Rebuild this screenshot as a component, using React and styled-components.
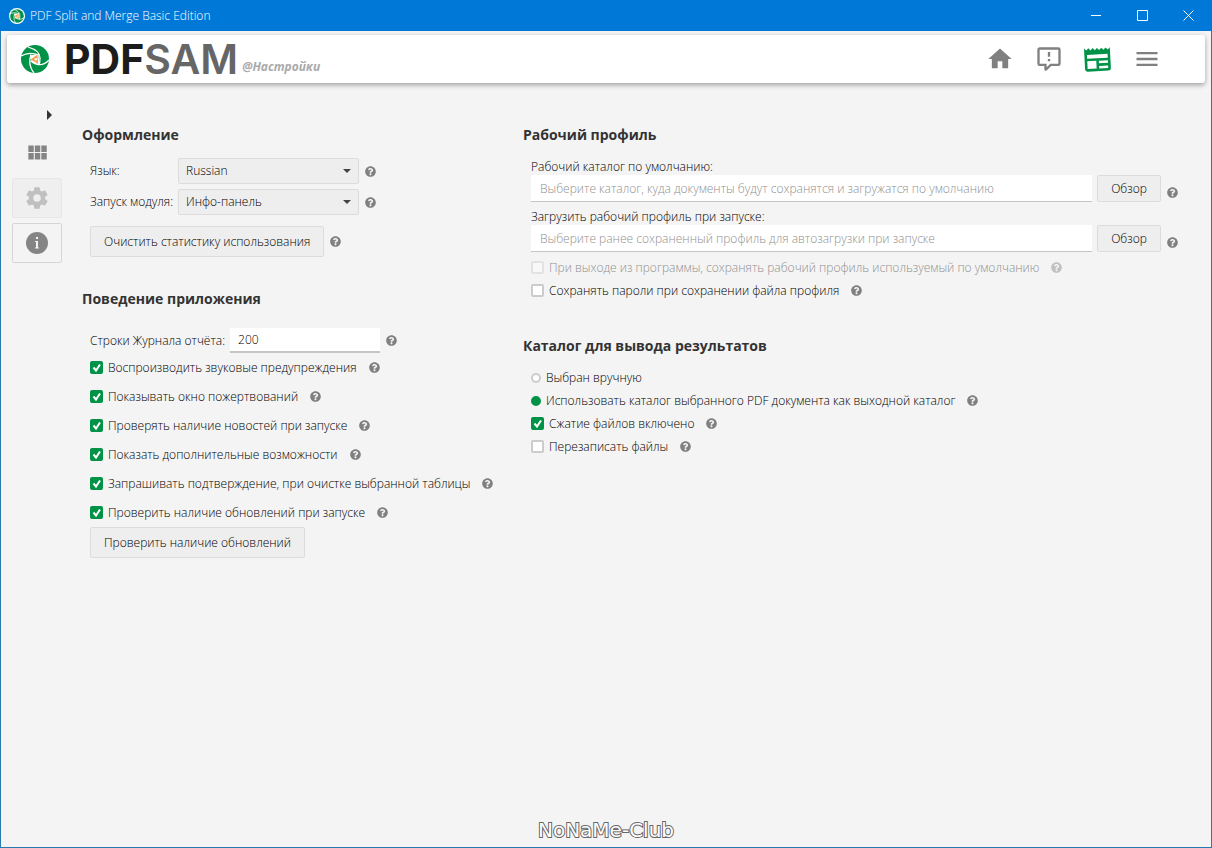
import React, { useState } from "react";
import styled, { createGlobalStyle } from "styled-components";
import { FaQuestionCircle } from "react-icons/fa";

const paths = {
  home: "M10,20V14H14V20H19V12H22L12,3L2,12H5V20H10Z",
  feedback:
    "M9,22A1,1 0 0,1 8,21V18H4A2,2 0 0,1 2,16V4C2,2.89 2.9,2 4,2H20A2,2 0 0,1 22,4V16A2,2 0 0,1 20,18H13.9L10.2,21.71C10,21.9 9.75,22 9.5,22H9M10,16V19.08L13.08,16H20V4H4V16H10M13,10H11V6H13V10M13,14H11V12H13V14Z",
  news: "M20,11H4V8H20M20,15H13V13H20M20,19H13V17H20M11,19H4V13H11M20.33,4.67L18.67,3L17,4.67L15.33,3L13.67,4.67L12,3L10.33,4.67L8.67,3L7,4.67L5.33,3L3.67,4.67L2,3V19A2,2 0 0,0 4,21H20A2,2 0 0,0 22,19V3L20.33,4.67Z",
  menu: "M3,6H21V8H3V6M3,11H21V13H3V11M3,16H21V18H3V16Z",
  modules:
    "M16,5V11H21V5M10,11H15V5H10M16,18H21V12H16M10,18H15V12H10M4,18H9V12H4M4,11H9V5H4V11Z",
  settings:
    "M12,15.5A3.5,3.5 0 0,1 8.5,12A3.5,3.5 0 0,1 12,8.5A3.5,3.5 0 0,1 15.5,12A3.5,3.5 0 0,1 12,15.5M19.43,12.97C19.47,12.65 19.5,12.33 19.5,12C19.5,11.67 19.47,11.34 19.43,11L21.54,9.37C21.73,9.22 21.78,8.95 21.66,8.73L19.66,5.27C19.54,5.05 19.27,4.96 19.05,5.05L16.56,6.05C16.04,5.66 15.5,5.32 14.87,5.07L14.5,2.42C14.46,2.18 14.25,2 14,2H10C9.75,2 9.54,2.18 9.5,2.42L9.13,5.07C8.5,5.32 7.96,5.66 7.44,6.05L4.95,5.05C4.73,4.96 4.46,5.05 4.34,5.27L2.34,8.73C2.21,8.95 2.27,9.22 2.46,9.37L4.57,11C4.53,11.34 4.5,11.67 4.5,12C4.5,12.33 4.53,12.65 4.57,12.97L2.46,14.63C2.27,14.78 2.21,15.05 2.34,15.27L4.34,18.73C4.46,18.95 4.73,19.03 4.95,18.95L7.44,17.94C7.96,18.34 8.5,18.68 9.13,18.93L9.5,21.58C9.54,21.82 9.75,22 10,22H14C14.25,22 14.46,21.82 14.5,21.58L14.87,18.93C15.5,18.67 16.04,18.34 16.56,17.94L19.05,18.95C19.27,19.03 19.54,18.95 19.66,18.73L21.66,15.27C21.78,15.05 21.73,14.78 21.54,14.63L19.43,12.97Z",
};

const behaviours = [
  { id: "sounds", label: "Воспроизводить звуковые предупреждения" },
  { id: "donation", label: "Показывать окно пожертвований" },
  { id: "news", label: "Проверять наличие новостей при запуске" },
  { id: "premium", label: "Показать дополнительные возможности" },
  {
    id: "clear",
    label: "Запрашивать подтверждение, при очистке выбранной таблицы",
  },
  { id: "updates", label: "Проверить наличие обновлений при запуске" },
];

const Icon = ({ name, size = 28 }) => (
  <svg width={size} height={size} viewBox="0 0 24 24" fill="currentColor">
    <path d={paths[name]} />
  </svg>
);

const InfoIcon = () => (
  <svg width="22" height="22" viewBox="0 0 22 22">
    <circle cx="11" cy="11" r="11" fill="currentColor" />
    <path
      d="M10 5H12V7H10ZM9 9H12V15.500H13V16.500H9V15.500H10V10H9Z"
      fill="#f4f4f4"
    />
  </svg>
);

const Logo = ({ size, ring }) => (
  <svg width={size} height={size} viewBox="0 0 28 28">
    <circle cx="14" cy="14" r="14" fill={ring ? "#fff" : "#009246"} />
    {ring && <circle cx="14" cy="14" r="12" fill="#009246" />}
    <path d="M9 10.500L17.500 9L18.500 19L11 18Z" fill="#fff" />
    <path
      d="M7 2C14 4 19 8 19 13C19 16 19 18 18 20M28 15C24 19.500 20 20 17 19.500C14 19 12 18 10 16M13 28C9 23 7.500 17 10 9.500M0 11C5 8 11 7.500 18 10"
      fill="none"
      stroke="#fff"
      strokeWidth="1.300"
    />
    <path d="M9.500 14.500L16.500 9.500L17 18.500Z" fill="#f4a04c" />
    <circle cx="14.800" cy="14.200" r="1.200" fill="#fff" />
  </svg>
);

const Help = ({ disabled }) => (
  <HelpStyled $disabled={disabled}>
    <FaQuestionCircle size={11} />
  </HelpStyled>
);

const Check = ({ id, label, defaultChecked = false, disabled = false, height }) => {
  const [checked, setChecked] = useState(defaultChecked);

  return (
    <OptionRow $height={height}>
      <OptionLabel htmlFor={id} $disabled={disabled}>
        <BoxStyled>
          <CheckInput
            id={id}
            type="checkbox"
            checked={checked}
            disabled={disabled}
            onChange={(e) => setChecked(e.target.checked)}
          />
          {checked && (
            <TickStyled viewBox="0 0 13 13">
              <path d="M3.500 6.500L6 9.500L10 3.500" />
            </TickStyled>
          )}
        </BoxStyled>
        {label}
      </OptionLabel>
      <Help disabled={disabled} />
    </OptionRow>
  );
};

const Combo = ({ id, value }) => (
  <ComboStyled>
    <SelectStyled id={id} defaultValue={value}>
      <option>{value}</option>
    </SelectStyled>
    <ArrowStyled viewBox="0 0 8 4">
      <path d="M0 0H8L4 4Z" />
    </ArrowStyled>
  </ComboStyled>
);

const Browse = ({ id, label, placeholder }) => (
  <BrowseStyled>
    <label htmlFor={id}>{label}</label>
    <BrowseRow>
      <PathInput id={id} type="text" placeholder={placeholder} />
      <BrowseButton type="button">Обзор</BrowseButton>
      <BrowseHelp>
        <Help />
      </BrowseHelp>
    </BrowseRow>
  </BrowseStyled>
);

const App = () => (
  <WindowStyled>
    <GlobalStyle />
    <TitleBar>
      <Logo size={16} ring />
      <TitleText>PDF Split and Merge Basic Edition</TitleText>
      <WindowButton type="button" aria-label="Minimize">
        <svg width="11" height="11" viewBox="0 0 11 11">
          <path d="M0 5.500H10" />
        </svg>
      </WindowButton>
      <WindowButton type="button" aria-label="Maximize">
        <svg width="11" height="11" viewBox="0 0 11 11">
          <path d="M.5 .5H10.500V10.500H.5Z" />
        </svg>
      </WindowButton>
      <WindowButton type="button" aria-label="Close">
        <svg width="11" height="11" viewBox="0 0 11 11">
          <path d="M.5 .5L10.500 10.500M10.500 .5L.5 10.500" />
        </svg>
      </WindowButton>
    </TitleBar>

    <HeaderStyled>
      <Logo size={28} />
      <BrandStyled>
        PDF<span>SAM</span>
      </BrandStyled>
      <SectionName>@Настройки</SectionName>
      <HeaderButton type="button" aria-label="Home">
        <Icon name="home" />
      </HeaderButton>
      <HeaderButton type="button" aria-label="Feedback">
        <Icon name="feedback" />
      </HeaderButton>
      <HeaderButton type="button" aria-label="News" $active>
        <Icon name="news" size={31} />
      </HeaderButton>
      <HeaderButton type="button" aria-label="Menu">
        <Icon name="menu" />
      </HeaderButton>
    </HeaderStyled>

    <BodyStyled>
      <SideBar>
        <ExpandButton type="button" aria-label="Expand">
          <svg width="5" height="10" viewBox="0 0 5 10">
            <path d="M0 0L5 5L0 10Z" fill="#333" />
          </svg>
        </ExpandButton>
        <SideButton type="button" aria-label="Modules">
          <Icon name="modules" size={26} />
        </SideButton>
        <SideButton type="button" aria-label="Settings" $selected>
          <Icon name="settings" size={26} />
        </SideButton>
        <SideButton type="button" aria-label="About" $outlined>
          <InfoIcon />
        </SideButton>
      </SideBar>

      <ColumnsStyled>
        <ColumnStyled>
          <HeadingStyled>Оформление</HeadingStyled>
          <PanelStyled>
            <SelectGrid>
              <label htmlFor="language">Язык:</label>
              <Combo id="language" value="Russian" />
              <Help />
              <label htmlFor="startup">Запуск модуля:</label>
              <Combo id="startup" value="Инфо-панель" />
              <Help />
            </SelectGrid>
            <ClearRow>
              <ButtonStyled type="button">
                Очистить статистику использования
              </ButtonStyled>
              <Help />
            </ClearRow>
          </PanelStyled>

          <HeadingStyled>Поведение приложения</HeadingStyled>
          <PanelStyled>
            <LogRow>
              <label htmlFor="log-rows">Строки Журнала отчёта:</label>
              <NumberInput id="log-rows" type="text" defaultValue="200" />
              <Help />
            </LogRow>
            {behaviours.map((item) => (
              <Check key={item.id} {...item} height={29} defaultChecked />
            ))}
            <ButtonStyled type="button">Проверить наличие обновлений</ButtonStyled>
          </PanelStyled>
        </ColumnStyled>

        <ColumnStyled>
          <HeadingStyled>Рабочий профиль</HeadingStyled>
          <PanelStyled>
            <BrowseList>
              <Browse
                id="workdir"
                label="Рабочий каталог по умолчанию:"
                placeholder="Выберите каталог, куда документы будут сохранятся и загружатся по умолчанию"
              />
              <Browse
                id="workspace"
                label="Загрузить рабочий профиль при запуске:"
                placeholder="Выберите ранее сохраненный профиль для автозагрузки при запуске"
              />
            </BrowseList>
            <Check
              id="save-workspace"
              label="При выходе из программы, сохранять рабочий профиль используемый по умолчанию"
              height={23}
              disabled
            />
            <Check
              id="save-passwords"
              label="Сохранять пароли при сохранении файла профиля"
              height={23}
            />
          </PanelStyled>

          <OutputHeading>Каталог для вывода результатов</OutputHeading>
          <PanelStyled $compact>
            <OptionRow $height={23}>
              <OptionLabel htmlFor="manual">
                <RadioInput id="manual" type="radio" name="output" />
                Выбран вручную
              </OptionLabel>
            </OptionRow>
            <OptionRow $height={23}>
              <OptionLabel htmlFor="same">
                <RadioInput id="same" type="radio" name="output" defaultChecked />
                Использовать каталог выбранного PDF документа как выходной каталог
              </OptionLabel>
              <Help />
            </OptionRow>
            <Check
              id="compress"
              label="Сжатие файлов включено"
              height={23}
              defaultChecked
            />
            <Check id="overwrite" label="Перезаписать файлы" height={23} />
          </PanelStyled>
        </ColumnStyled>
      </ColumnsStyled>
    </BodyStyled>

    <WatermarkStyled>NoNaMe-Club</WatermarkStyled>
  </WindowStyled>
);

const GlobalStyle = createGlobalStyle`
  *,
  *::before,
  *::after {
    box-sizing: border-box;
  }

  body {
    margin: 0;
    color: #000;
    background-color: #f4f4f4;
    font: 300 12px/16px "Open Sans", "Noto Sans", sans-serif;
  }

  button,
  input,
  select {
    margin: 0;
    color: inherit;
    font: inherit;
  }

  svg {
    display: block;
    flex: none;
  }
`;

const WindowStyled = styled.div`
  min-height: 100vh;
  display: flex;
  flex-direction: column;
  border: 1px solid #2779ae;
  border-top: 0;
`;

const TitleBar = styled.header`
  height: 31px;
  margin: 0 -1px;
  padding: 0 1px 0 9px;
  display: flex;
  align-items: center;
  color: white;
  background-color: #0078d7;
`;

const TitleText = styled.span`
  margin-left: 5px;
  margin-right: auto;
`;

const WindowButton = styled.button`
  width: 46px;
  height: 31px;
  padding: 0;
  display: flex;
  align-items: center;
  justify-content: center;
  border: 0;
  background: none;

  path {
    fill: none;
    stroke: white;
  }
`;

const HeaderStyled = styled.div`
  height: 48px;
  margin: 4px 6px 0;
  padding: 0 34px 0 14px;
  display: flex;
  align-items: center;
  border-radius: 3px;
  background-color: white;
  box-shadow: 0 2px 5px rgba(0, 0, 0, 0.35);
`;

const BrandStyled = styled.div`
  margin-left: 15px;
  color: #1c1c1c;
  font: 700 41px/48px Inter, sans-serif;

  span {
    color: #666;
    font-weight: 600;
  }
`;

const SectionName = styled.span`
  margin: 16px auto 0 4px;
  color: #aaa;
  font-weight: bold;
  font-style: italic;
`;

const HeaderButton = styled.button`
  width: 49px;
  height: 40px;
  padding: 0;
  display: flex;
  align-items: center;
  justify-content: center;
  border: 0;
  color: ${({ $active }) => ($active ? "#009246" : "#808080")};
  background: none;

  svg {
    transform: ${({ $active }) => ($active ? "rotate(-3deg)" : "none")};
  }
`;

const BodyStyled = styled.main`
  flex: 1;
  padding: 22px 32px 0 11px;
  display: flex;
  align-items: flex-start;
`;

const SideBar = styled.nav`
  width: 50px;
  margin-right: 20px;
  display: flex;
  flex-direction: column;
  gap: 5px;
`;

const ExpandButton = styled.button`
  height: 20px;
  margin-bottom: 3px;
  padding: 0 10px;
  display: flex;
  align-items: center;
  justify-content: flex-end;
  border: 0;
  background: none;
`;

const SideButton = styled.button`
  height: 40px;
  padding: 0;
  display: flex;
  align-items: center;
  justify-content: center;
  border: 1px solid
    ${({ $selected, $outlined }) =>
      $outlined ? "#d6d6d6" : $selected ? "#e6e6e6" : "transparent"};
  border-radius: 2px;
  color: ${({ $selected }) => ($selected ? "#c0c0c0" : "#858585")};
  background-color: ${({ $selected }) => ($selected ? "#efefef" : "transparent")};
`;

const ColumnsStyled = styled.div`
  flex: 1;
  padding-top: 20px;
  display: grid;
  grid-template-columns: 425px minmax(0, 1fr);
  column-gap: 16px;
`;

const ColumnStyled = styled.section`
  min-width: 0;
`;

const HeadingStyled = styled.h2`
  margin: 0;
  color: #333;
  font-size: 14px;
  font-weight: bold;
  line-height: 20px;
`;

const OutputHeading = styled(HeadingStyled)`
  margin-top: 34px;
`;

const PanelStyled = styled.div`
  padding: ${({ $compact }) => ($compact ? 10 : 13)}px 0 0 8px;
`;

const SelectGrid = styled.div`
  display: grid;
  grid-template-columns: 83px 181px auto;
  justify-content: start;
  align-items: center;
  gap: 5px;
  white-space: nowrap;
`;

const ComboStyled = styled.div`
  display: grid;
  align-items: center;
`;

const SelectStyled = styled.select`
  grid-area: 1 / 1;
  height: 26px;
  padding: 0 24px 0 7px;
  appearance: none;
  border: 1px solid #dcdcdc;
  border-radius: 2px;
  background-color: #eee;
`;

const ArrowStyled = styled.svg`
  grid-area: 1 / 1;
  justify-self: end;
  width: 8px;
  height: 4px;
  margin-right: 8px;
  fill: #444;
  pointer-events: none;
`;

const HelpStyled = styled.span`
  display: flex;
  padding: 0 1px;
  color: ${({ $disabled }) => ($disabled ? "#c0c0c0" : "#808080")};
`;

const ButtonStyled = styled.button`
  height: 31px;
  padding: 0 13px;
  border: 1px solid #dcdcdc;
  border-radius: 2px;
  background-color: #eee;
  white-space: nowrap;
`;

const ClearRow = styled.div`
  margin: 11px 0 32px;
  display: flex;
  align-items: center;
  gap: 5px;
`;

const LogRow = styled.div`
  margin-top: 6px;
  display: flex;
  align-items: center;
  gap: 5px;
`;

const InputStyled = styled.input`
  min-width: 0;
  border: 0;
  border-bottom: 1px solid #c4c4c4;
  background-color: white;
  outline: none;

  &::placeholder {
    color: #909090;
    opacity: 1;
  }
`;

const NumberInput = styled(InputStyled)`
  width: 150px;
  height: 25px;
  padding: 0 8px;
  border-bottom-width: 2px;
`;

const PathInput = styled(InputStyled)`
  flex: 1;
  height: 27px;
  padding: 0 9px;
`;

const BrowseList = styled.div`
  margin-bottom: 4px;
  padding-top: 1px;
  display: grid;
  gap: 7px;
`;

const BrowseStyled = styled.div`
  label {
    display: block;
  }
`;

const BrowseRow = styled.div`
  display: flex;
  align-items: flex-end;
  gap: 5px;
`;

const BrowseButton = styled(ButtonStyled)`
  width: 64px;
  height: 27px;
`;

const BrowseHelp = styled.div`
  padding-bottom: 4px;
`;

const OptionRow = styled.div`
  height: ${({ $height }) => $height}px;
  display: flex;
  align-items: center;
  gap: 11px;
  white-space: nowrap;
`;

const OptionLabel = styled.label`
  display: flex;
  align-items: center;
  gap: 5px;
  color: ${({ $disabled }) => ($disabled ? "#909090" : "inherit")};
`;

const BoxStyled = styled.span`
  display: grid;
`;

const CheckInput = styled.input`
  grid-area: 1 / 1;
  width: 13px;
  height: 13px;
  appearance: none;
  border: 2px solid #ccc;
  border-radius: 2px;
  background-color: white;

  &:checked {
    border-color: #009246;
    background-color: #009246;
  }

  &:disabled {
    border-color: #e2e2e2;
    background-color: #f8f8f8;
  }
`;

const TickStyled = styled.svg`
  grid-area: 1 / 1;
  width: 13px;
  height: 13px;
  fill: none;
  stroke: white;
  stroke-width: 2;
  pointer-events: none;
`;

const RadioInput = styled.input`
  width: 10px;
  height: 10px;
  appearance: none;
  border: 2px solid #ccc;
  border-radius: 50%;
  background-color: white;

  &:checked {
    border-color: #009246;
    background-color: #009246;
  }
`;

const WatermarkStyled = styled.footer`
  padding-bottom: 5px;
  color: white;
  font: 20px/24px "DejaVu Sans", sans-serif;
  text-align: center;
  -webkit-text-stroke: 2px #666;
  paint-order: stroke fill;
`;

export default App;
